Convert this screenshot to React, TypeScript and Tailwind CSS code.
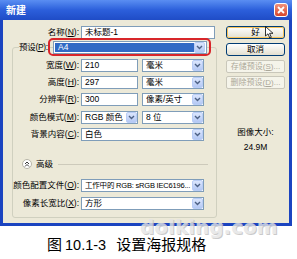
import React from 'react';

const FONT = "font-['Liberation_Sans','Noto_Sans_CJK_SC',sans-serif]";

// underline the access key, e.g. "名称(N):"
function Accel({ text }: { text: string }) {
  const m = text.match(/^(.*\()(\w)(\).*)$/);
  if (!m) return <>{text}</>;
  return (
    <>
      {m[1]}
      <span className="underline">{m[2]}</span>
      {m[3]}
    </>
  );
}

function Arrow() {
  return (
    <span className="flex h-[11px] w-[11px] shrink-0 items-center justify-center rounded-[2px] border border-[#b9cdf6] bg-gradient-to-b from-[#dbe6fd] to-[#b4c8f4]">
      <svg width="7" height="5" viewBox="0 0 7 5">
        <path d="M1 1 L3.5 3.5 L6 1" fill="none" stroke="#4d6185" strokeWidth="1.4" />
      </svg>
    </span>
  );
}

function Field({ w, children }: { w: string; children?: React.ReactNode }) {
  return (
    <div className={`${w} flex h-[13px] items-center whitespace-nowrap border border-[#7f9db9] bg-white pl-[3px] text-[8.5px] leading-none text-black`}>
      {children}
    </div>
  );
}

function Combo({ w, value, small }: { w: string; value: string; small?: boolean }) {
  return (
    <div className={`${w} flex h-[13px] items-center border border-[#7f9db9] bg-white pl-[3px] text-black`}>
      <span className={`flex-1 overflow-hidden whitespace-nowrap leading-none ${small ? 'text-[7.5px] tracking-[-0.2px]' : 'text-[8.5px]'}`}>
        {value}
      </span>
      <Arrow />
    </div>
  );
}

function Row({ label, lw, children }: { label: string; lw: string; children: React.ReactNode }) {
  return (
    <div className="flex h-[13px] items-center">
      <span className={`${lw} shrink-0 whitespace-nowrap text-right text-[8.5px] leading-none text-black`}>
        <Accel text={label} />
      </span>
      <div className="ml-[2px] flex items-center gap-[4px]">{children}</div>
    </div>
  );
}

function Btn({ label, mt, primary, disabled }: { label: string; mt: string; primary?: boolean; disabled?: boolean }) {
  if (disabled) {
    return (
      <div className={`${mt} flex h-[13px] items-center justify-center whitespace-nowrap rounded-[2px] border border-[#c9c7ba] bg-[#f5f4ea] text-[8px] leading-none text-[#aca899]`}>
        <Accel text={label} />
      </div>
    );
  }
  return (
    <div className={`${mt} rounded-[3px] border border-[#003c74] bg-gradient-to-b from-white to-[#e3e0d0]`}>
      <div
        className={`flex h-[11px] items-center justify-center rounded-[2px] border text-[8.5px] leading-none text-black ${
          primary ? 'border-[#f8c35a]' : 'border-transparent'
        }`}
      >
        {label}
      </div>
    </div>
  );
}

export default function App() {
  return (
    <div className={`relative h-[259px] w-[297px] overflow-hidden bg-white ${FONT}`}>
      {/* dialog window */}
      <div className="w-[292px] bg-[#1b44c0] px-[3px] pb-[3px]">
        <div className="-mx-[3px] flex h-[20px] items-center justify-between bg-gradient-to-b from-[#5a8ef2] via-[#2c5fdb] to-[#1f4cc6] pl-[6px] pr-[4px]">
          <span className="text-[10px] font-bold text-white">新建</span>
          <span className="flex h-[14px] w-[14px] items-center justify-center rounded-[3px] border border-white bg-gradient-to-b from-[#f0907a] to-[#d6452a]">
            <svg width="8" height="8" viewBox="0 0 8 8">
              <path d="M1 1 L7 7 M7 1 L1 7" stroke="white" strokeWidth="1.8" />
            </svg>
          </span>
        </div>

        <div className="flex h-[203px] bg-[#ece9d8]">
          {/* left column */}
          <div className="w-[215px] pt-[6px]">
            <Row label="名称(N):" lw="w-[76px]">
              <Field w="w-[134px]">未标题-1</Field>
            </Row>

            <div className="ml-[9px] mt-[8px] h-[171px] w-[205px] rounded-[3px] border border-[#d0d0bf]">
              {/* preset row on the group edge */}
              <div className="-mt-[10px] flex h-[18px] items-center">
                <span className="ml-[6px] w-[29px] shrink-0 whitespace-nowrap bg-[#ece9d8] text-[8.5px] leading-none tracking-[-0.3px] text-black">
                  <Accel text="预设(P):" />
                </span>
                <div className="h-[18px] w-[163px] shrink-0 rounded-[5px] border-2 border-[#d8262a] pl-[3px] pr-[2px] pt-[1px]">
                  <div className="flex h-[13px] items-center border border-[#7f9db9] bg-white p-px">
                    <span className="flex h-full flex-1 items-center bg-[#316ac5] pl-[3px] text-[8.5px] leading-none text-white">A4</span>
                    <Arrow />
                  </div>
                </div>
              </div>

              <div className="mt-[3px]">
                <Row label="宽度(W):" lw="w-[66px]">
                  <Field w="w-[57px]">210</Field>
                  <Combo w="w-[62px]" value="毫米" />
                </Row>
              </div>
              <div className="mt-[4px]">
                <Row label="高度(H):" lw="w-[66px]">
                  <Field w="w-[57px]">297</Field>
                  <Combo w="w-[62px]" value="毫米" />
                </Row>
              </div>
              <div className="mt-[4px]">
                <Row label="分辨率(R):" lw="w-[66px]">
                  <Field w="w-[57px]">300</Field>
                  <Combo w="w-[62px]" value="像素/英寸" />
                </Row>
              </div>
              <div className="mt-[5px]">
                <Row label="颜色模式(M):" lw="w-[66px]">
                  <Combo w="w-[57px]" value="RGB 颜色" />
                  <Combo w="w-[62px]" value="8 位" />
                </Row>
              </div>
              <div className="mt-[4px]">
                <Row label="背景内容(C):" lw="w-[66px]">
                  <Combo w="w-[123px]" value="白色" />
                </Row>
              </div>

              {/* advanced */}
              <div className="mt-[17px] flex h-[12px] items-center">
                <span className="ml-[9px] flex h-[10px] w-[10px] items-center justify-center rounded-full border border-[#b8b6a8] bg-white">
                  <svg width="6" height="6" viewBox="0 0 6 6">
                    <path d="M1 3 L3 1 L5 3 M1 5.5 L3 3.5 L5 5.5" fill="none" stroke="#3a3a3a" strokeWidth="1" />
                  </svg>
                </span>
                <span className="ml-[4px] text-[8.5px] leading-none text-black">高级</span>
                <span className="ml-[5px] h-px w-[150px] bg-[#cdcabb]" />
              </div>

              <div className="mt-[9px]">
                <Row label="颜色配置文件(O):" lw="w-[66px]">
                  <Combo w="w-[123px]" value="工作中的 RGB: sRGB IEC6196..." small />
                </Row>
              </div>
              <div className="mt-[5px]">
                <Row label="像素长宽比(X):" lw="w-[66px]">
                  <Combo w="w-[123px]" value="方形" />
                </Row>
              </div>
            </div>
          </div>

          {/* right column */}
          <div className="ml-[8px] w-[59px] pt-[6px]">
            <Btn label="好" mt="mt-0" primary />
            <Btn label="取消" mt="mt-[4px]" />
            <Btn label="存储预设(S)..." mt="mt-[4px]" disabled />
            <Btn label="删除预设(D)..." mt="mt-[3px]" disabled />
            <div className="mt-[38px] text-center text-[8.5px] leading-[11px] text-black">图像大小:</div>
            <div className="mt-[4px] text-center text-[8.5px] leading-[11px] text-black">24.9M</div>
          </div>
        </div>
      </div>

      {/* mouse cursor over OK */}
      <svg className="absolute left-[265px] top-[26px]" width="9" height="13" viewBox="0 0 9 13">
        <path d="M0.5 0.5 L0.5 10 L3 7.8 L4.8 12 L6.3 11.3 L4.6 7.3 L8 7.3 Z" fill="white" stroke="black" strokeWidth="0.8" />
      </svg>

      {/* watermark */}
      <span className="absolute left-[140px] top-[212px] font-['DejaVu_Sans',sans-serif] text-[20px] font-bold text-[#e4e4e4] opacity-80 [text-shadow:1px_1px_0_#bdbdbd]">
        dolking.com
      </span>

      {/* caption */}
      <div className="mt-[9px] flex h-[18px] items-baseline pl-[47px] text-black">
        <span className="font-['Noto_Sans_CJK_SC',sans-serif] text-[15px] leading-[18px]">图</span>
        <span className="ml-[3px] font-['Liberation_Sans',sans-serif] text-[14.5px] leading-[18px]">10.1-3</span>
        <span className="ml-[10px] font-['Noto_Sans_CJK_SC',sans-serif] text-[15px] leading-[18px]">设置海报规格</span>
      </div>
    </div>
  );
}
